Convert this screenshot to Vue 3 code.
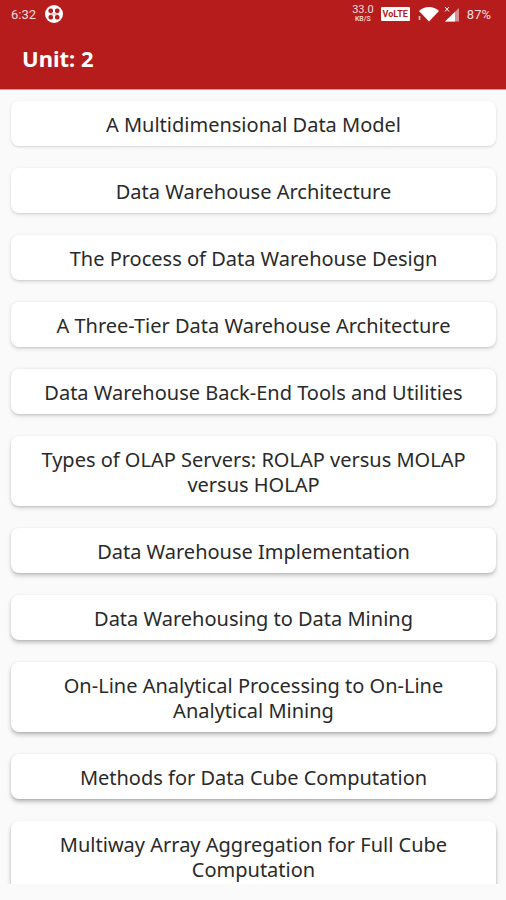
<script setup>
const topics = [
  'A Multidimensional Data Model',
  'Data Warehouse Architecture',
  'The Process of Data Warehouse Design',
  'A Three-Tier Data Warehouse Architecture',
  'Data Warehouse Back-End Tools and Utilities',
  'Types of OLAP Servers: ROLAP versus MOLAP versus HOLAP',
  'Data Warehouse Implementation',
  'Data Warehousing to Data Mining',
  'On-Line Analytical Processing to On-Line Analytical Mining',
  'Methods for Data Cube Computation',
  'Multiway Array Aggregation for Full Cube Computation',
]
</script>

<template>
  <div class="screen">
    <header class="top">
      <div class="status">
        <span>6:32</span>
        <svg class="app-icon" viewBox="0 0 18 18" aria-hidden="true">
          <circle cx="9" cy="9" r="9" fill="#fff" />
          <g fill="#b71c1c">
            <rect x="3.500" y="3.500" width="4.500" height="4.500" rx="1.800" />
            <rect x="10" y="3.500" width="4.500" height="4.500" rx="1.800" />
            <rect x="3.500" y="10" width="4.500" height="4.500" rx="1.800" />
            <rect x="10" y="10" width="4.500" height="4.500" rx="1.800" />
            <path d="M5 8.500h8v1H5z" opacity=".4" />
          </g>
        </svg>
        <span class="speed"><span class="rate">33.0</span><span class="unit">KB/S</span></span>
        <span class="volte">VoLTE</span>
        <svg class="wifi" viewBox="0 0 22 16" aria-hidden="true">
          <path d="M1 5C6.500-.5 15.500-.5 21 5L11 15.500z" fill="#fff" />
          <path d="M1.500 10v4" fill="none" stroke="#fff" stroke-width="1.500" stroke-opacity=".8" />
        </svg>
        <svg class="signal" viewBox="0 0 15 16" aria-hidden="true">
          <path d="M15 2v13.500H1z" fill="#fff" fill-opacity=".5" />
          <path d="M11 6v9.500H1z" fill="#fff" />
          <path d="M1 1l4 4.500M5 1L1 5.500" stroke="#fff" />
        </svg>
        <span class="battery">87%</span>
      </div>
      <h1 class="title">Unit: 2</h1>
    </header>
    <main class="list">
      <button
        v-for="(topic, i) in topics"
        :key="topic"
        type="button"
        class="card"
        :style="{ '--depth': i }"
      >{{ topic }}</button>
    </main>
  </div>
</template>

<style>
body {
  margin: 0;
  background: #fafafa;
}
</style>

<style scoped>
.screen {
  box-sizing: border-box;
  display: flex;
  flex-direction: column;
  height: 100vh;
  padding-bottom: 16px;
  background: #fafafa;
  font-family: "Noto Sans", sans-serif;
}

.top {
  flex: none;
  height: 89px;
  background: #b71c1c;
  border-bottom: 1px solid #e58f8a;
  color: #fff;
}

.status {
  display: flex;
  align-items: center;
  height: 28px;
  padding: 0 15px 0 11px;
  font-family: Roboto, sans-serif;
  font-size: 13px;
  color: #f8dcdc;
}

.app-icon {
  width: 18px;
  height: 18px;
  margin-left: 9px;
}

.speed {
  display: flex;
  flex-direction: column;
  align-items: center;
  margin-left: auto;
}

.rate {
  font-size: 11px;
  line-height: 11px;
}

.unit {
  font-size: 7px;
  font-weight: 500;
  line-height: 9px;
}

.volte {
  margin-left: 7px;
  padding: 0 2px;
  border-radius: 1px;
  background: #fff;
  color: #b71c1c;
  font-size: 9px;
  font-weight: 700;
  line-height: 14px;
}

.wifi {
  width: 22px;
  height: 16px;
  margin-left: 8px;
}

.signal {
  width: 15px;
  height: 16px;
  margin-left: 4px;
}

.battery {
  margin-left: 8px;
}

.title {
  margin: 0;
  padding: 15px 22px;
  font-size: 22px;
  font-weight: 700;
  line-height: 30px;
}

.list {
  flex: 1;
  min-height: 0;
  display: flex;
  flex-direction: column;
  gap: 22px;
  padding: 11px 10px 0 11px;
  overflow-y: auto;
  scrollbar-width: none;
}

.card {
  flex: none;
  padding: 11px 24px 9px;
  border: 0;
  border-radius: 8px;
  background: #fff;
  box-shadow:
    0 1px 2px rgba(0, 0, 0, 0.1),
    0 calc(1px + var(--depth) * 0.2px) 4px rgba(0, 0, 0, calc(0.06 + var(--depth) * 0.02));
  color: #2a2a2a;
  font-family: inherit;
  font-size: 20px;
  line-height: 25px;
  text-align: center;
}
</style>
